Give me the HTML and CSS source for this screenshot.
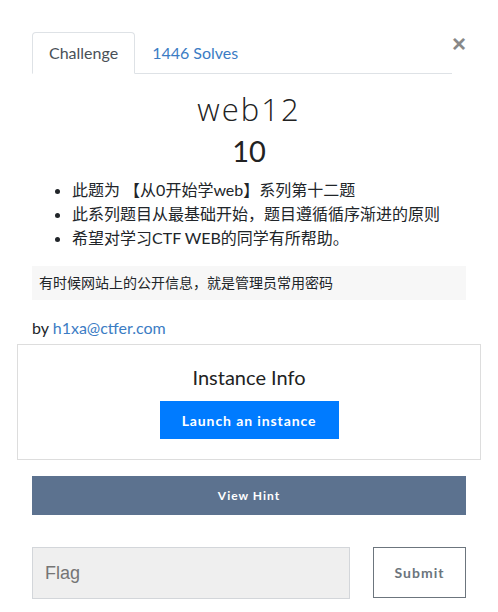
FILE: index.html
```html
<!DOCTYPE html>
<html lang="zh">
<head>
<meta charset="utf-8">
<title>web12</title>
<link rel="stylesheet" href="styles.css">
</head>
<body>
<div class="modal">
  <div class="header">
    <ul class="tabs">
      <li class="tab active">Challenge</li>
      <li class="tab link">1446 Solves</li>
    </ul>
    <button class="close" aria-label="Close">&times;</button>
  </div>

  <h2 class="title">web12</h2>
  <h3 class="value">10</h3>

  <ul class="desc">
    <li>此题为 【从0开始学web】系列第十二题</li>
    <li>此系列题目从最基础开始，题目遵循循序渐进的原则</li>
    <li>希望对学习CTF WEB的同学有所帮助。</li>
  </ul>

  <div class="hintbox">有时候网站上的公开信息，就是管理员常用密码</div>

  <p class="author">by <a class="mail">h1xa@ctfer.com</a></p>

  <div class="instance">
    <div class="instance-title">Instance Info</div>
    <button class="launch">Launch an instance</button>
  </div>

  <button class="viewhint">View Hint</button>

  <div class="submit-row">
    <div class="flag">Flag</div>
    <button class="submit">Submit</button>
  </div>
</div>
</body>
</html>
```
FILE: styles.css
```css
* { box-sizing: border-box; }
html, body { margin: 0; padding: 0; background: #fff; }
body {
  font-family: Lato, "Noto Sans CJK SC", sans-serif;
  font-size: 16px;
  line-height: 1.5;
  color: #212529;
}
.modal {
  width: 498px;
  padding: 32px 32px 0 32px;
}
.header {
  display: flex;
  align-items: flex-start;
}
.tabs {
  list-style: none;
  margin: 0;
  padding: 0;
  display: flex;
  flex: 1;
  border-bottom: 1px solid #dee2e6;
}
.tab {
  padding: 8px 16px;
  border: 1px solid transparent;
  border-top-left-radius: 4px;
  border-top-right-radius: 4px;
  margin-bottom: -1px;
  line-height: 24px;
}
.tab.active {
  color: #495057;
  border-color: #dee2e6 #dee2e6 #fff;
  background: #fff;
}
.tab.link { color: #3b7cc4; }
.close {
  width: 14px;
  padding: 0;
  border: 0;
  background: none;
  font-family: "Liberation Sans", sans-serif;
  font-size: 24px;
  line-height: 20px;
  font-weight: 700;
  color: #888;
  margin-top: 2px;
}
.title {
  font-family: "Open Sans", sans-serif;
  font-weight: 300;
  letter-spacing: 2px;
  font-size: 31px;
  line-height: 38px;
  text-align: center;
  margin: 16px 0 0;
  color: #222;
}
.value {
  font-weight: 400;
  font-size: 29px;
  line-height: 34px;
  text-align: center;
  margin: 6px 0 0;
  color: #222;
}
.desc {
  margin: 10px 0 0;
  padding-left: 40px;
  line-height: 24px;
}
.hintbox {
  margin-top: 16px;
  background: #f7f7f7;
  padding: 7px 7px;
  font-size: 14px;
  line-height: 20px;
}
.author {
  margin: 16px 0 0;
  line-height: 24px;
}
.mail { color: #3b7cc4; }
.instance {
  margin: 4px -15px 0;
  border: 1px solid #dddddd;
  padding: 20px 0 20px;
  text-align: center;
}
.instance-title {
  font-size: 20px;
  line-height: 24px;
  color: #222;
}
.launch {
  margin-top: 12px;
  width: 179px;
  height: 38px;
  border: 0;
  background: #007bff;
  color: #fff;
  font-family: Lato, sans-serif;
  font-weight: 700;
  font-size: 14px;
  letter-spacing: 0.9px;
}
.viewhint {
  display: block;
  width: 100%;
  margin-top: 16px;
  height: 39px;
  border: 0;
  background: #5c728f;
  color: #fff;
  font-family: Lato, sans-serif;
  font-weight: 700;
  font-size: 12px;
  letter-spacing: 1px;
}
.submit-row {
  display: flex;
  gap: 23px;
  margin-top: 32px;
}
.flag {
  width: 318px;
  height: 52px;
  background: #efefef;
  border: 1px solid #d3d6da;
  font-family: "Liberation Sans", sans-serif;
  font-size: 18px;
  line-height: 50px;
  padding-left: 12px;
  color: #757575;
}
.submit {
  width: 93px;
  height: 51px;
  background: #fff;
  border: 1px solid #6c757d;
  color: #6c757d;
  font-family: Lato, sans-serif;
  font-weight: 700;
  font-size: 14px;
  letter-spacing: 1px;
}
```
